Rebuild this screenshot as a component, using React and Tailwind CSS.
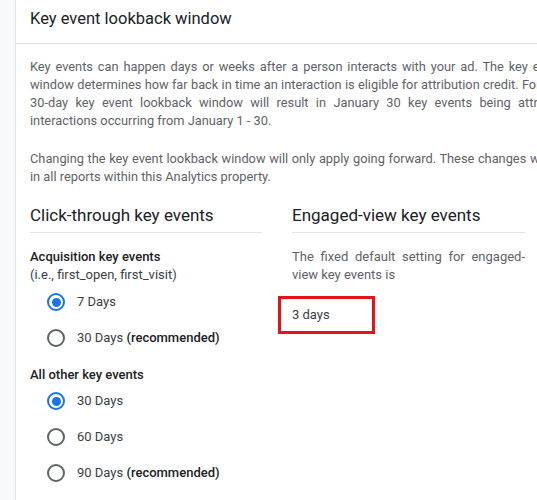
import React from "react";

function Radio({ checked, label, bold }) {
  return (
    <div className="flex h-[36px] items-center pl-[17px]">
      <div
        className={
          "flex h-[18px] w-[18px] items-center justify-center rounded-full border-2 " +
          (checked ? "border-[#1a73e8]" : "border-[#5f6368]")
        }
      >
        {checked && <div className="h-[9px] w-[9px] rounded-full bg-[#1a73e8]" />}
      </div>
      <span className="ml-[12px] text-[13px] text-[#3c4043]">
        {label}
        {bold && <span className="font-medium text-[#202124]"> (recommended)</span>}
      </span>
    </div>
  );
}

function JLine({ children, className = "" }) {
  return (
    <span className={"block text-justify [text-align-last:justify] " + className}>{children}</span>
  );
}

export default function App() {
  return (
    <div
      className="flex h-[500px] w-[537px] overflow-hidden bg-white"
      style={{ fontFamily: "Roboto, 'Liberation Sans', sans-serif" }}
    >
      <div className="w-[16px] shrink-0 border-r border-[#e3e3e3] bg-[#f8f9fa]" />
      <div className="w-[640px] shrink-0">
        <div className="flex h-[44px] items-center border-b border-[#e3e3e3] pl-[14px] pb-[5px]">
          <h1 className="text-[16.5px] text-[#202124]">Key event lookback window</h1>
        </div>
        <div className="pl-[14px] pt-[14px]">
          <p className="w-[590px] whitespace-nowrap text-[12.8px] leading-[18px] text-[#5f6368]">
            <JLine>Key events can happen days or weeks after a person interacts with your ad. The key event lookback</JLine>
            <JLine className="w-[575px]">window determines how far back in time an interaction is eligible for attribution credit. For example, a</JLine>
            <JLine className="w-[562px]">30-day key event lookback window will result in January 30 key events being attributed to</JLine>
            <span className="block">interactions occurring from January 1 - 30.</span>
          </p>
          <p className="mt-[20px] w-[590px] whitespace-nowrap text-[12.8px] leading-[18px] text-[#5f6368]">
            <JLine>Changing the key event lookback window will only apply going forward. These changes will be reflected</JLine>
            <span className="block">in all reports within this Analytics property.</span>
          </p>
          <div className="mt-[17px] flex gap-[30px]">
            <div className="w-[232px]">
              <div className="border-b border-[#e3e3e3] pb-[5px]">
                <h2 className="text-[17px] leading-[24px] text-[#202124]">Click-through key events</h2>
              </div>
              <div className="mt-[15px] text-[13px] leading-[18px]">
                <div className="font-medium text-[#202124]">Acquisition key events</div>
                <div className="text-[#3c4043]">(i.e., first_open, first_visit)</div>
              </div>
              <Radio checked label="7 Days" />
              <Radio label="30 Days" bold />
              <div className="mt-[11px] text-[13px] font-medium leading-[16px] text-[#202124]">
                All other key events
              </div>
              <Radio checked label="30 Days" />
              <Radio label="60 Days" />
              <Radio label="90 Days" bold />
            </div>
            <div className="w-[233px]">
              <div className="border-b border-[#e3e3e3] pb-[5px]">
                <h2 className="text-[17px] leading-[24px] text-[#202124]">Engaged-view key events</h2>
              </div>
              <p className="mt-[15px] text-justify text-[13px] leading-[18px] text-[#5f6368]">
                The fixed default setting for engaged-view key events is
              </p>
              <div className="ml-[-14px] mt-[12px] flex h-[38px] w-[97px] items-center border-[3px] border-[#e3131c] pl-[11px] text-[13px] text-[#3c4043]">
                3 days
              </div>
            </div>
          </div>
        </div>
      </div>
    </div>
  );
}
